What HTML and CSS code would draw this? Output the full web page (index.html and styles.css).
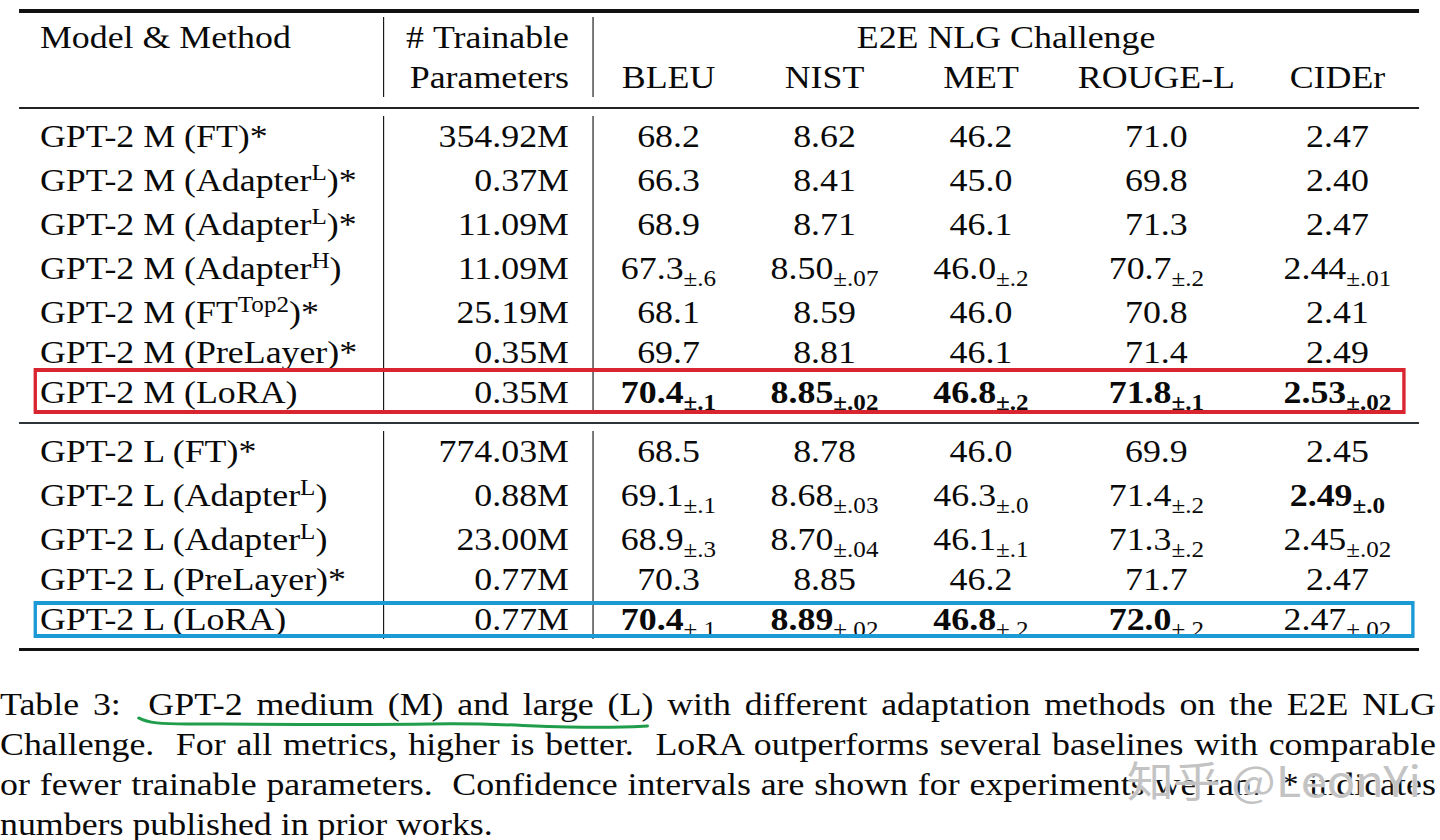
FILE: index.html
```html
<!DOCTYPE html>
<html>
<head>
<meta charset="utf-8">
<link rel="stylesheet" href="styles.css">
</head>
<body>
<div class="page">
  <div class="table">
    <div class="head">
      <div class="row">
        <span class="c1">Model &amp; Method</span>
        <span class="c2">#&nbsp;Trainable</span>
        <span class="c3 span5">E2E NLG Challenge</span>
      </div>
      <div class="row">
        <span class="c1"></span>
        <span class="c2">Parameters</span>
        <span class="c3">BLEU</span><span class="m">NIST</span><span class="m">MET</span><span class="m">ROUGE-L</span><span class="m">CIDEr</span>
      </div>
    </div>

    <div class="group">
      <div class="row">
        <span class="c1">GPT-2 M (FT)*</span><span class="c2">354.92M</span>
        <span class="c3">68.2</span><span class="m">8.62</span><span class="m">46.2</span><span class="m">71.0</span><span class="m">2.47</span>
      </div>
      <div class="row tall">
        <span class="c1">GPT-2 M (Adapter<sup>L</sup>)*</span><span class="c2">0.37M</span>
        <span class="c3">66.3</span><span class="m">8.41</span><span class="m">45.0</span><span class="m">69.8</span><span class="m">2.40</span>
      </div>
      <div class="row tall">
        <span class="c1">GPT-2 M (Adapter<sup>L</sup>)*</span><span class="c2">11.09M</span>
        <span class="c3">68.9</span><span class="m">8.71</span><span class="m">46.1</span><span class="m">71.3</span><span class="m">2.47</span>
      </div>
      <div class="row tall">
        <span class="c1">GPT-2 M (Adapter<sup>H</sup>)</span><span class="c2">11.09M</span>
        <span class="c3">67.3<sub>±.6</sub></span><span class="m">8.50<sub>±.07</sub></span><span class="m">46.0<sub>±.2</sub></span><span class="m">70.7<sub>±.2</sub></span><span class="m">2.44<sub>±.01</sub></span>
      </div>
      <div class="row tall">
        <span class="c1">GPT-2 M (FT<sup>Top2</sup>)*</span><span class="c2">25.19M</span>
        <span class="c3">68.1</span><span class="m">8.59</span><span class="m">46.0</span><span class="m">70.8</span><span class="m">2.41</span>
      </div>
      <div class="row">
        <span class="c1">GPT-2 M (PreLayer)*</span><span class="c2">0.35M</span>
        <span class="c3">69.7</span><span class="m">8.81</span><span class="m">46.1</span><span class="m">71.4</span><span class="m">2.49</span>
      </div>
      <div class="row mark-red">
        <span class="c1">GPT-2 M (LoRA)</span><span class="c2">0.35M</span>
        <span class="c3"><b>70.4</b><sub class="bold">±.1</sub></span><span class="m"><b>8.85</b><sub class="bold">±.02</sub></span><span class="m"><b>46.8</b><sub class="bold">±.2</sub></span><span class="m"><b>71.8</b><sub class="bold">±.1</sub></span><span class="m"><b>2.53</b><sub class="bold">±.02</sub></span>
      </div>
    </div>

    <div class="group">
      <div class="row">
        <span class="c1">GPT-2 L (FT)*</span><span class="c2">774.03M</span>
        <span class="c3">68.5</span><span class="m">8.78</span><span class="m">46.0</span><span class="m">69.9</span><span class="m">2.45</span>
      </div>
      <div class="row tall">
        <span class="c1">GPT-2 L (Adapter<sup>L</sup>)</span><span class="c2">0.88M</span>
        <span class="c3">69.1<sub>±.1</sub></span><span class="m">8.68<sub>±.03</sub></span><span class="m">46.3<sub>±.0</sub></span><span class="m">71.4<sub>±.2</sub></span><span class="m"><b>2.49</b><sub class="bold">±.0</sub></span>
      </div>
      <div class="row tall">
        <span class="c1">GPT-2 L (Adapter<sup>L</sup>)</span><span class="c2">23.00M</span>
        <span class="c3">68.9<sub>±.3</sub></span><span class="m">8.70<sub>±.04</sub></span><span class="m">46.1<sub>±.1</sub></span><span class="m">71.3<sub>±.2</sub></span><span class="m">2.45<sub>±.02</sub></span>
      </div>
      <div class="row">
        <span class="c1">GPT-2 L (PreLayer)*</span><span class="c2">0.77M</span>
        <span class="c3">70.3</span><span class="m">8.85</span><span class="m">46.2</span><span class="m">71.7</span><span class="m">2.47</span>
      </div>
      <div class="row mark-blue">
        <span class="c1">GPT-2 L (LoRA)</span><span class="c2">0.77M</span>
        <span class="c3"><b>70.4</b><sub>±.1</sub></span><span class="m"><b>8.89</b><sub>±.02</sub></span><span class="m"><b>46.8</b><sub>±.2</sub></span><span class="m"><b>72.0</b><sub>±.2</sub></span><span class="m">2.47<sub>±.02</sub></span>
      </div>
    </div>
  </div>

  <div class="caption">
    <div class="line">Table 3:&nbsp; <span class="ul">GPT-2 medium (M) and large (L)</span> with different adaptation methods on the E2E NLG</div>
    <div class="line">Challenge.&nbsp; For all metrics, higher is better.&nbsp; LoRA outperforms several baselines with comparable</div>
    <div class="line">or fewer trainable parameters.&nbsp; Confidence intervals are shown for experiments we ran.&nbsp; * indicates</div>
    <div class="line last">numbers published in prior works.</div>
    <svg class="scribble" width="460" height="16" viewBox="0 0 460 16" aria-hidden="true">
      <path d="M2 3 C 10 8, 22 9, 45 9 S 200 10, 262 9 S 340 11, 385 12 S 440 12, 456 11" fill="none" stroke="#1f9d4b" stroke-width="3" stroke-linecap="round"/>
    </svg>
    <div class="watermark">知乎 @LeonYi</div>
  </div>
</div>
</body>
</html>
```

FILE: styles.css
```css
html, body {
  margin: 0;
  padding: 0;
  background: #fff;
}

body {
  width: 1440px;
  height: 840px;
  overflow: hidden;
  font-family: "Liberation Serif", "Times New Roman", serif;
  color: #0a0a0a;
}

.page {
  width: 1285.7px;
  transform: scaleX(1.12);
  transform-origin: 0 0;
}

.table {
  margin: 9px 0 0 17px;
  width: 1250px;
  border-top: 4px solid #111;
  border-bottom: 3.5px solid #111;
  font-size: 32px;
  line-height: 40px;
}

.head {
  padding: 4px 0 10px;
  border-bottom: 2px solid #222;
}

.group {
  padding: 7px 0 10px;
}

.group + .group {
  border-top: 2px solid #2e3438;
  padding-bottom: 9px;
}

.row {
  display: grid;
  grid-template-columns: 325px 186.6px 135.6px 144px 135.4px 177.8px 145.6px;
  position: relative;
}

.row > span {
  display: block;
  height: 40px;
  white-space: nowrap;
}

.row.tall > span {
  padding-top: 4px;
}

.c1 {
  padding-left: 18.7px;
  text-align: left;
}

.c2 {
  border-left: 1.4px solid #111;
  padding-right: 20.6px;
  text-align: right;
}

.c3 {
  border-left: 1.4px solid #111;
  text-align: center;
}

.m {
  text-align: center;
}

.span5 {
  grid-column: 3 / 8;
}

sup {
  font-size: 0.7em;
  line-height: 0;
  vertical-align: 11px;
}

sub {
  font-size: 0.7em;
  line-height: 0;
  vertical-align: -7px;
}

sub.bold {
  font-weight: bold;
}

b {
  font-weight: bold;
}

.mark-red::after,
.mark-blue::after {
  content: "";
  position: absolute;
  pointer-events: none;
}

.mark-red::after {
  left: 12.5px;
  right: 11.6px;
  top: -4px;
  bottom: -2px;
  border: 4px solid #d9252f;
  border-left-width: 3.6px;
  border-right-width: 3.6px;
}

.mark-blue::after {
  left: 12.5px;
  right: 4.5px;
  top: 2px;
  bottom: 1px;
  border: 4px solid #1b9ad6;
  border-left-width: 3.6px;
  border-right-width: 3.6px;
}

.caption {
  position: relative;
  margin-top: 33px;
  width: 1282px;
  font-size: 32px;
  line-height: 40px;
}

.line {
  text-align: justify;
  text-align-last: justify;
  white-space: nowrap;
}

.line.last {
  text-align: left;
  text-align-last: left;
}

.scribble {
  position: absolute;
  left: 122px;
  top: 31px;
}

.watermark {
  position: absolute;
  left: 1006px;
  top: 70px;
  font-family: "Noto Sans CJK SC", "Noto Sans", sans-serif;
  font-size: 42px;
  line-height: 50px;
  color: rgba(185, 185, 185, 0.85);
  text-shadow: 0 0 2px #fff, 0 0 1px #fff;
  white-space: nowrap;
}
```
